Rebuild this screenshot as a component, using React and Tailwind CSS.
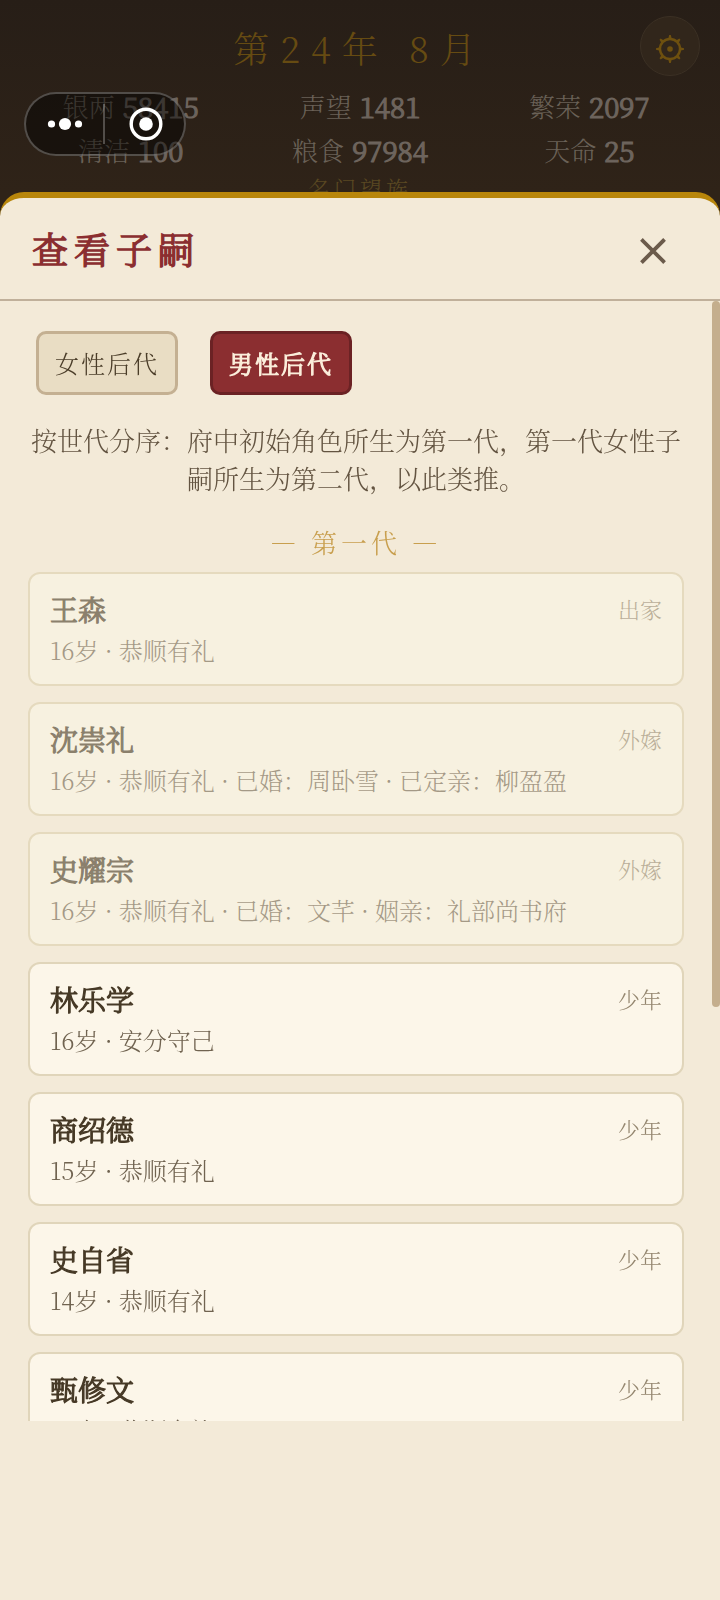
const stats = [
  ["银两", "58415"],
  ["声望", "1481"],
  ["繁荣", "2097"],
  ["清洁", "100"],
  ["粮食", "97984"],
  ["天命", "25"],
];

const heirs = [
  { name: "王森", detail: "16岁 · 恭顺有礼", status: "出家", away: true },
  { name: "沈崇礼", detail: "16岁 · 恭顺有礼 · 已婚：周卧雪 · 已定亲：柳盈盈", status: "外嫁", away: true },
  { name: "史耀宗", detail: "16岁 · 恭顺有礼 · 已婚：文芊 · 姻亲：礼部尚书府", status: "外嫁", away: true },
  { name: "林乐学", detail: "16岁 · 安分守己", status: "少年" },
  { name: "商绍德", detail: "15岁 · 恭顺有礼", status: "少年" },
  { name: "史自省", detail: "14岁 · 恭顺有礼", status: "少年" },
  { name: "甄修文", detail: "14岁 · 恭顺有礼", status: "少年" },
];

function Gear() {
  return (
    <svg viewBox="0 0 30 30" className="size-[30px]" fill="none" stroke="currentColor" strokeWidth="2.4">
      <circle cx="15" cy="15" r="10" />
      <circle cx="15" cy="15" r="2.8" fill="currentColor" stroke="none" />
      {[0, 45, 90, 135, 180, 225, 270, 315].map((a) => (
        <path key={a} d="M13.2 5L14.2 1H15.8L16.8 5Z" fill="currentColor" stroke="none" transform={`rotate(${a} 15 15)`} />
      ))}
    </svg>
  );
}

function TopBar() {
  return (
    <header className="relative flex flex-col items-center px-4 pt-6">
      <h1 className="text-[36px] leading-[48px] tracking-[11px] text-[#664b12]">第24年 8月</h1>
      <button
        type="button"
        aria-label="设置"
        className="absolute top-4 right-5 flex size-[60px] items-center justify-center rounded-full border border-[#3b3024] bg-[#31261b] pt-1.5 text-[#6e500f]"
      >
        <Gear />
      </button>
      <dl className="mt-3 grid w-full grid-cols-3 text-center text-[26px] leading-[44px] text-[#6a6157]">
        {stats.map(([label, value]) => (
          <div key={label} className="flex justify-center gap-2">
            <dt>{label}</dt>
            <dd className="text-[28px] text-[#6d645d] [-webkit-text-stroke:1.2px]">{value}</dd>
          </div>
        ))}
      </dl>
      <p className="text-[22px] leading-8 tracking-[4px] text-[#5a4822]">名门望族</p>
    </header>
  );
}

function Capsule() {
  return (
    <div className="fixed top-[92px] left-6 flex h-16 w-[162px] items-center rounded-full border-2 border-white/25 bg-black/45 text-white">
      <button type="button" aria-label="更多" className="flex flex-1 justify-center">
        <svg viewBox="0 0 36 14" className="h-[14px] w-9" fill="currentColor">
          <circle cx="4.5" cy="7" r="3.6" />
          <circle cx="18" cy="7" r="6.1" />
          <circle cx="31.5" cy="7" r="3.6" />
        </svg>
      </button>
      <span className="h-10 w-0.5 bg-white/25" />
      <button type="button" aria-label="关闭小程序" className="flex flex-1 justify-center pl-0.5">
        <svg viewBox="0 0 34 34" className="size-[34px]" fill="none" stroke="currentColor">
          <circle cx="17" cy="17" r="14.8" strokeWidth="3.4" />
          <circle cx="17" cy="17" r="6.8" fill="currentColor" stroke="none" />
        </svg>
      </button>
    </div>
  );
}

function HeirCard({ heir }) {
  return (
    <li
      className={`rounded-xl border-2 px-5 pt-3.5 pb-4 ${
        heir.away ? "border-[#dccfae] bg-[#fbf6e6] opacity-60" : "border-[#e0d5ba] bg-[#fcf6e9]"
      }`}
    >
      <div className="flex items-center justify-between">
        <h4 className="text-[28px] leading-[42px] text-[#463926] [-webkit-text-stroke:1.2px]">{heir.name}</h4>
        <span className="text-[22px] leading-8 text-[#94866f]">{heir.status}</span>
      </div>
      <p className="mt-0.5 text-[24px] leading-9 text-[#706350]">{heir.detail}</p>
    </li>
  );
}

function Dash() {
  return <span className="[font-variant-east-asian:full-width]">—</span>;
}

export default function App() {
  return (
    <div className="relative h-screen overflow-hidden bg-linear-to-b from-[#271e17] from-0% to-[#2f2318] to-12% font-['Noto_Serif_CJK_SC','Noto_Serif_SC','Liberation_Serif','Noto_Sans_CJK_SC',serif] font-light">
      <TopBar />
      <Capsule />
      <section
        role="dialog"
        aria-labelledby="sheet-title"
        className="fixed inset-x-0 bottom-0 flex h-[88vh] flex-col rounded-t-3xl border-t-6 border-[#b8860b] bg-[#f3ead8]"
      >
        <div className="flex items-center justify-between border-b-2 border-[#c0b09a] px-8 py-6">
          <h2 id="sheet-title" className="text-[36px] leading-[53px] tracking-[6px] text-[#8b2e30] [-webkit-text-stroke:1.5px]">
            查看子嗣
          </h2>
          <button type="button" aria-label="关闭" className="-my-4 flex size-[70px] items-center justify-center pt-1 text-[#6b5b4b]">
            <svg viewBox="0 0 28 28" className="size-7" stroke="currentColor" strokeWidth="3.8" strokeLinecap="square">
              <path d="M3.8 3.8L24.2 24.2M24.2 3.8L3.8 24.2" />
            </svg>
          </button>
        </div>
        <div className="flex h-[70vh]">
          <div className="min-w-0 flex-1 overflow-y-auto px-7 pt-[30px] pb-8 [scrollbar-width:none]">
            <div className="flex gap-8 pl-2 text-[24px] leading-[58px] tracking-[2px]">
              <button type="button" className="rounded-[10px] border-3 border-[#c4b092] bg-[#e9ddc4] px-4 text-[#4a3c28]">
                女性后代
              </button>
              <button type="button" className="rounded-[10px] border-3 border-[#6b2224] bg-[#8b2e30] px-4 text-[#fbeedb] [-webkit-text-stroke:1.2px]">
                男性后代
              </button>
            </div>
            <p className="mt-[26px] flex pl-[3px] text-[26px] leading-[38px] text-[#635441]">
              <span className="shrink-0">按世代分序：</span>
              <span>府中初始角色所生为第一代，第一代女性子嗣所生为第二代，以此类推。</span>
            </p>
            <h3 className="mt-[26px] text-center text-[26px] leading-[38px] tracking-[4px] text-[#c89f4e]">
              <Dash /> 第一代 <Dash />
            </h3>
            <ul className="mt-[11px] flex flex-col gap-4">
              {heirs.map((heir) => (
                <HeirCard key={heir.name} heir={heir} />
              ))}
            </ul>
          </div>
          <div className="w-2">
            <div className="h-[63%] rounded-full bg-[#c4ae8d]" />
          </div>
        </div>
      </section>
    </div>
  );
}
